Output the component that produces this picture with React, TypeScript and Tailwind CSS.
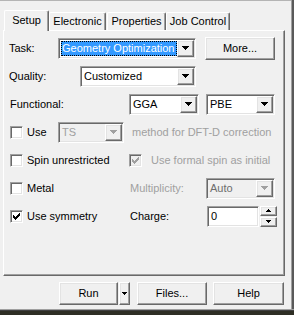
import React from 'react';

// classic win32 bevels
const raised =
  'bg-[#f0f0f0] border border-t-white border-l-white border-b-[#696969] border-r-[#696969] shadow-[inset_-1px_-1px_0_#a0a0a0,inset_1px_1px_0_#e3e3e3]';
const sunken =
  'border border-t-[#a0a0a0] border-l-[#a0a0a0] border-b-white border-r-white shadow-[inset_1px_1px_0_#696969,inset_-1px_-1px_0_#e3e3e3]';

function Tri({ up = false, color = '#000', w = 7 }: { up?: boolean; color?: string; w?: number }) {
  const rows = Math.ceil(w / 2);
  return (
    <svg width={w} height={rows} shapeRendering="crispEdges">
      {Array.from({ length: rows }).map((_, i) => (
        <rect key={i} x={i} y={up ? rows - 1 - i : i} width={w - i * 2} height={1} fill={color} />
      ))}
    </svg>
  );
}

const checkYs = [2, 3, 4, 3, 2, 1, 0];

function Check({ checked = false, disabled = false }: { checked?: boolean; disabled?: boolean }) {
  return (
    <span
      className={`${sunken} flex h-[13px] w-[13px] shrink-0 items-center justify-center ${disabled ? 'bg-[#f0f0f0]' : 'bg-white'}`}
    >
      {checked && (
        <svg width="7" height="7" shapeRendering="crispEdges">
          {checkYs.map((y, x) => (
            <rect key={x} x={x} y={y} width={1} height={3} fill={disabled ? '#a0a0a0' : '#000'} />
          ))}
        </svg>
      )}
    </span>
  );
}

interface ComboProps {
  value: string;
  className: string;
  disabled?: boolean;
  focused?: boolean;
  textColor?: string;
}

function Combo({ value, className, disabled = false, focused = false, textColor = 'text-black' }: ComboProps) {
  return (
    <div className={`${sunken} ${className} flex h-[21px] shrink-0 p-[1px] ${disabled ? 'bg-[#f0f0f0]' : 'bg-white'}`}>
      <div className="flex min-w-0 flex-1 items-center">
        {focused ? (
          <span className="ml-[1px] flex h-[15px] flex-1 items-center bg-[#3399ff] pl-[1px] text-white outline-1 outline-dotted outline-[#000] -outline-offset-1">
            {value}
          </span>
        ) : (
          <span className={`pl-[2px] ${textColor}`}>{value}</span>
        )}
      </div>
      <div className={`${raised} flex w-[17px] items-center justify-center`}>
        <Tri color={disabled ? '#a0a0a0' : '#000'} />
      </div>
    </div>
  );
}

function Button({ label, className }: { label: string; className: string }) {
  return <div className={`${raised} ${className} flex h-[23px] shrink-0 items-center justify-center`}>{label}</div>;
}

function Tab({ label, active = false, className }: { label: string; active?: boolean; className: string }) {
  return (
    <div
      className={`${className} flex items-center justify-center rounded-t-[2px] border-t border-l border-r border-t-white border-l-white border-r-[#696969] bg-[#f0f0f0] shadow-[inset_-1px_0_0_#a0a0a0] ${
        active ? 'relative z-10 -mb-[1px] h-[21px] pb-[1px]' : 'h-[18px]'
      }`}
    >
      {label}
    </div>
  );
}

export default function App() {
  return (
    <div className="flex h-[315px] w-[294px] flex-col overflow-hidden bg-[#f0f0f0] font-['Liberation_Sans',Arial,sans-serif] text-[11px] leading-none text-black">
      <div className="flex flex-1">
        <div className="flex w-[291px] flex-col border-t border-t-[#b4b4b4] pl-[3px]">
          {/* tab strip */}
          <div className="mt-[9px] flex h-[20px] items-end pl-[1px]">
            <Tab label="Setup" active className="w-[45px]" />
            <Tab label="Electronic" className="w-[57px]" />
            <Tab label="Properties" className="ml-[1px] w-[59px]" />
            <Tab label="Job Control" className="w-[64px]" />
          </div>

          {/* tab page */}
          <div className="flex h-[246px] w-[282px] flex-col border border-t-white border-l-white border-b-[#696969] border-r-[#696969] pt-[3px] shadow-[inset_-1px_-1px_0_#a0a0a0]">
            <div className="flex h-[28px] items-center">
              <span className="w-[54px] pl-[5px]">Task:</span>
              <Combo value="Geometry Optimization" className="w-[138px]" focused />
              <Button label="More..." className="ml-[9px] w-[70px]" />
            </div>

            <div className="flex h-[28px] items-center">
              <span className="w-[76px] pl-[5px]">Quality:</span>
              <Combo value="Customized" className="w-[116px]" />
            </div>

            <div className="flex h-[28px] items-center">
              <span className="w-[125px] pl-[6px]">Functional:</span>
              <Combo value="GGA" className="w-[70px]" />
              <Combo value="PBE" className="ml-[7px] w-[69px]" />
            </div>

            <div className="flex h-[28px] items-center">
              <div className="flex w-[54px] items-center gap-[4px] pl-[6px]">
                <Check />
                <span>Use</span>
              </div>
              <Combo value="TS" className="w-[66px]" disabled textColor="text-[#a0a0a0]" />
              <span className="ml-[8px] text-[#a0a0a0]">method for DFT-D correction</span>
            </div>

            <div className="flex h-[28px] items-center">
              <div className="flex w-[125px] items-center gap-[4px] pl-[6px]">
                <Check />
                <span>Spin unrestricted</span>
              </div>
              <Check checked disabled />
              <span className="ml-[9px] text-[#a0a0a0]">Use formal spin as initial</span>
            </div>

            <div className="flex h-[28px] items-center">
              <div className="flex w-[125px] items-center gap-[4px] pl-[6px]">
                <Check />
                <span>Metal</span>
              </div>
              <span className="w-[77px] pl-[1px] text-[#a0a0a0]">Multiplicity:</span>
              <Combo value="Auto" className="w-[69px]" disabled textColor="text-[#6d6d6d]" />
            </div>

            <div className="flex h-[28px] items-center">
              <div className="flex w-[125px] items-center gap-[4px] pl-[6px]">
                <Check checked />
                <span>Use symmetry</span>
              </div>
              <span className="w-[78px] pl-[1px]">Charge:</span>
              <div className={`${sunken} flex h-[21px] w-[52px] items-center bg-white pl-[3px]`}>0</div>
              <div className="ml-[1px] flex h-[21px] w-[17px] flex-col">
                <div className={`${raised} flex h-[10px] items-center justify-center`}>
                  <Tri up w={5} />
                </div>
                <div className={`${raised} mt-[1px] flex h-[10px] items-center justify-center`}>
                  <Tri w={5} />
                </div>
              </div>
            </div>
          </div>

          {/* dialog buttons */}
          <div className="mt-[6px] flex h-[23px] items-center">
            <Button label="Run" className="ml-[56px] w-[59px]" />
            <div className={`${raised} ml-[1px] flex h-[23px] w-[11px] items-center justify-center`}>
              <Tri w={5} />
            </div>
            <Button label="Files..." className="ml-[7px] w-[70px]" />
            <Button label="Help" className="ml-[6px] w-[71px]" />
          </div>
        </div>

        {/* window frame, right */}
        <div className="w-[3px] border-l border-l-[#a0a0a0] bg-[#5a5a5a]" />
      </div>

      {/* window frame, bottom */}
      <div className="h-[6px] border-t border-t-[#a0a0a0] bg-[#2e2e24] shadow-[inset_0_1px_0_#404040]" />
    </div>
  );
}
